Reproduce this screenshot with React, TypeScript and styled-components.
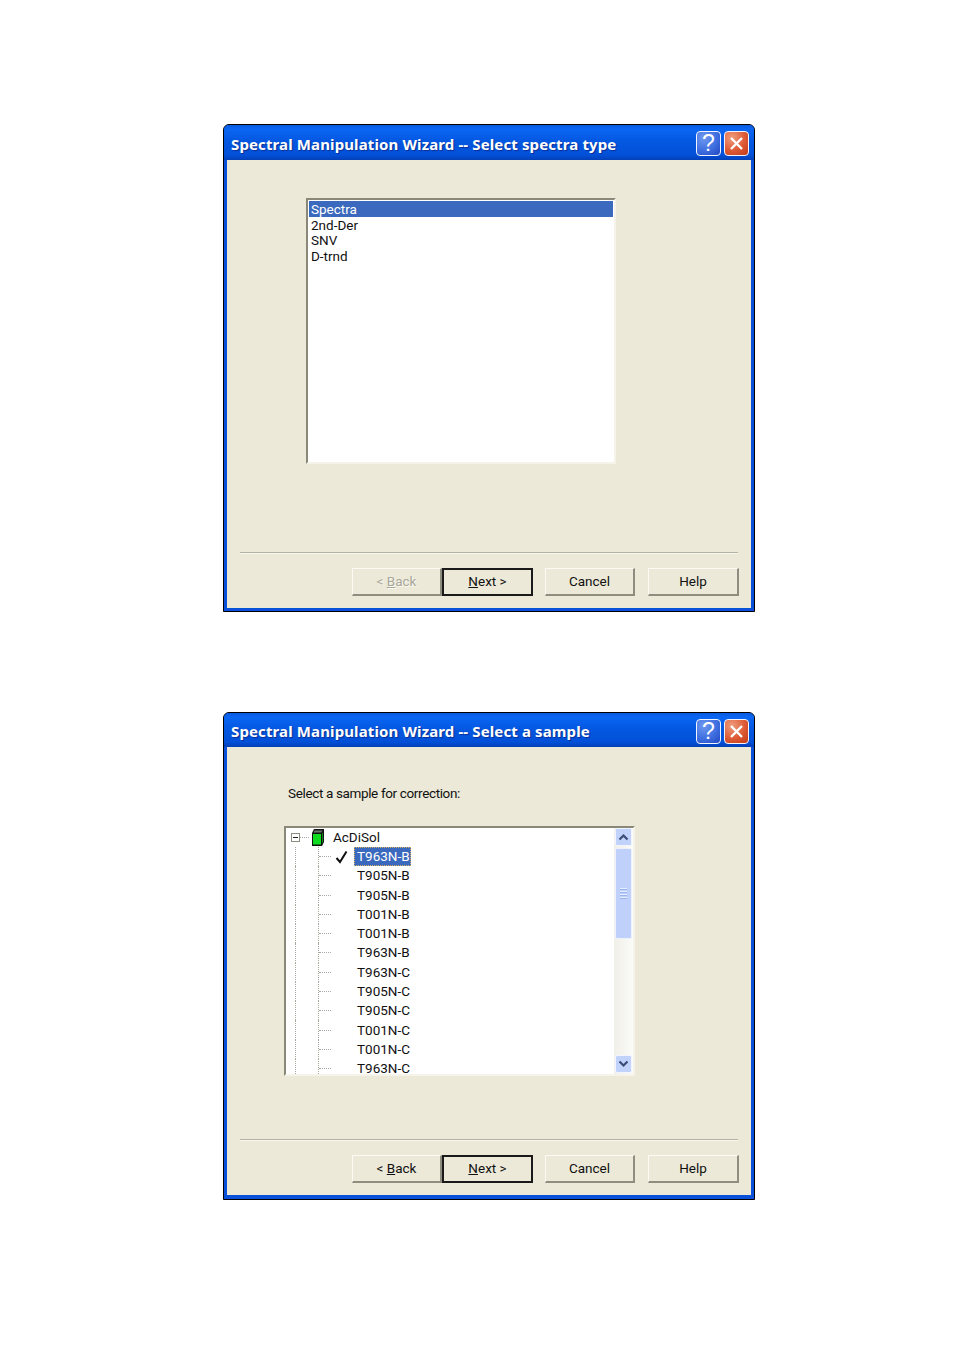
import React from 'react'
import styled, { createGlobalStyle } from 'styled-components'

const GlobalStyle = createGlobalStyle`
  html, body {
    margin: 0;
    padding: 0;
    background: #fff;
  }
`

const Page = styled.div`
  width: 955px;
  height: 1350px;
  box-sizing: border-box;
  padding: 124px 0 0 223px;
  display: flex;
  flex-direction: column;
  gap: 100px;
  font-family: Roboto, 'Liberation Sans', Arial, sans-serif;
  font-size: 13.5px;
  color: #111;
`

const Window = styled.div`
  width: 532px;
  height: 488px;
  box-sizing: border-box;
  display: flex;
  flex-direction: column;
  background: #0b50d8;
  border: 1px solid #000;
  border-radius: 6px 6px 0 0;
  overflow: hidden;
`

const TitleBar = styled.div<{ $compact?: boolean }>`
  height: ${p => (p.$compact ? 34 : 35)}px;
  flex: none;
  display: flex;
  align-items: center;
  justify-content: space-between;
  box-sizing: border-box;
  padding: 2px 5px 0 7px;
  background: linear-gradient(180deg, #0a5ae0 0%, #0a66f2 12%, #0458e2 45%, #0350d8 85%, #0340b8 100%);
`

const Title = styled.div`
  font-family: 'Noto Sans', sans-serif;
  font-size: 15px;
  font-weight: 700;
  letter-spacing: 0.12px;
  color: #fff;
  text-shadow: 1px 1px 1px #0a2f96;
  white-space: nowrap;
`

const TitleButtons = styled.div`
  display: flex;
  gap: 3px;
`

const CaptionButton = styled.div<{ $danger?: boolean }>`
  width: 25px;
  height: 25px;
  box-sizing: border-box;
  display: flex;
  align-items: center;
  justify-content: center;
  border: 1px solid #f2f5ff;
  border-radius: 4px;
  color: #fff;
  font-family: 'Liberation Sans', sans-serif;
  font-size: 23px;
  background: ${p =>
    p.$danger
      ? 'radial-gradient(circle at 30% 25%, #ef9d7e 0%, #dd5a35 55%, #c13a18 100%)'
      : 'radial-gradient(circle at 30% 25%, #6f98ef 0%, #3f6fe0 55%, #2148c0 100%)'};
`

const Body = styled.div<{ $compact?: boolean }>`
  flex: 1;
  min-height: 0;
  display: flex;
  flex-direction: column;
  margin: 0 3px ${p => (p.$compact ? 4 : 3)}px;
  background: #ece9d8;
`

const Content = styled.div`
  flex: 1;
  min-height: 0;
  display: flex;
  flex-direction: column;
  align-items: flex-start;
`

const ListBox = styled.div`
  width: 310px;
  height: 266px;
  margin: 38px 0 0 79px;
  box-sizing: border-box;
  padding: 1px 1px 0;
  background: #fff;
  border-style: solid;
  border-width: 2px;
  border-color: #8a8878 #f6f4ea #f6f4ea #8a8878;
`

const ListItem = styled.div<{ $selected?: boolean }>`
  height: 15.7px;
  line-height: 16px;
  padding-left: 2px;
  color: ${p => (p.$selected ? '#fff' : '#111')};
  background: ${p => (p.$selected ? '#3a69bd' : 'transparent')};
`

const Prompt = styled.div`
  margin: 38px 0 0 61px;
  height: 16px;
  line-height: 16px;
  letter-spacing: -0.36px;
`

const TreeBox = styled.div`
  width: 351px;
  height: 250px;
  margin: 25px 0 0 57px;
  box-sizing: border-box;
  display: flex;
  background: #fff;
  border-style: solid;
  border-width: 2px;
  border-color: #8a8878 #f6f4ea #f6f4ea #8a8878;
`

const TreeList = styled.div`
  flex: 1;
  min-width: 0;
  overflow: hidden;
`

const RootRow = styled.div`
  height: 19px;
  padding-bottom: 1px;
  box-sizing: border-box;
  display: flex;
  align-items: center;
  padding-left: 5px;
`

const Expander = styled.div`
  width: 9px;
  height: 9px;
  box-sizing: border-box;
  border: 1px solid #8c8c80;
  display: flex;
  align-items: center;
  justify-content: center;
  flex: none;
  &::after {
    content: '';
    width: 5px;
    height: 1px;
    background: #222;
  }
`

const RootLeader = styled.div`
  width: 9px;
  margin-right: 2px;
  border-top: 1px dotted #a8a8a0;
`

const RootLabel = styled.span`
  margin-left: 8px;
`

const TreeRow = styled.div`
  height: 19.27px;
  display: flex;
  align-items: center;
  padding-left: 9px;
`

const OuterGuide = styled.div`
  width: 23px;
  height: 100%;
  flex: none;
  box-sizing: border-box;
  border-left: 1px dotted #a8a8a0;
`

const BranchGuide = styled.div`
  width: 14px;
  height: 100%;
  flex: none;
  box-sizing: border-box;
  border-left: 1px dotted #a8a8a0;
  display: flex;
  align-items: center;
  &::after {
    content: '';
    width: 12px;
    border-top: 1px dotted #a8a8a0;
  }
`

const CheckSlot = styled.div`
  width: 22px;
  flex: none;
  display: flex;
  align-items: center;
  padding-left: 3px;
  box-sizing: border-box;
`

const NodeLabel = styled.span<{ $selected?: boolean }>`
  height: 19px;
  line-height: 18px;
  box-sizing: border-box;
  padding: 0 1px 0 3px;
  white-space: nowrap;
  color: ${p => (p.$selected ? '#fff' : '#111')};
  background: ${p => (p.$selected ? '#3a69bd' : 'transparent')};
  outline: ${p => (p.$selected ? '1px dotted #d8b060' : 'none')};
  outline-offset: -1px;
`

const ScrollBar = styled.div`
  width: 19px;
  flex: none;
  display: flex;
  flex-direction: column;
  align-items: center;
  gap: 2px;
  padding-bottom: 1px;
  box-sizing: border-box;
  background: linear-gradient(90deg, #f0efe8, #fbfbf8);
`

const ScrollButton = styled.div`
  width: 17px;
  height: 18px;
  flex: none;
  display: flex;
  align-items: center;
  justify-content: center;
  border: 1px solid #f2f5ff;
  box-sizing: border-box;
  border-radius: 2px;
  background: #c2d3fb;
`

const ScrollThumb = styled.div`
  width: 17px;
  height: 91px;
  flex: none;
  box-sizing: border-box;
  display: flex;
  flex-direction: column;
  align-items: center;
  justify-content: center;
  gap: 1px;
  border: 1px solid #eef2ff;
  border-radius: 2px;
  background: #bfd0fa;
`

const GripLine = styled.div`
  width: 7px;
  height: 1px;
  background: #e4ecff;
  border-bottom: 1px solid #9db4ea;
`

const ScrollTrack = styled.div`
  flex: 1;
`

const Footer = styled.div`
  flex: none;
  height: 56px;
  padding: 0 13px;
  display: flex;
  flex-direction: column;
`

const Separator = styled.div`
  height: 1px;
  background: #b4b2a2;
  border-bottom: 1px solid #f8f7f0;
`

const ButtonRow = styled.div`
  margin: 14px -1px 0 0;
  display: flex;
  justify-content: flex-end;
`

const Button = styled.div<{ $default?: boolean; $disabled?: boolean; $gap?: number; $width?: number }>`
  width: ${p => p.$width ?? 90}px;
  height: 28px;
  margin-left: ${p => p.$gap ?? 0}px;
  box-sizing: border-box;
  padding-bottom: 2px;
  display: flex;
  align-items: center;
  justify-content: center;
  border-style: solid;
  border-width: ${p => (p.$default ? '2px' : '1px 2px 2px 1px')};
  border-color: ${p => (p.$default ? '#1a1a1a' : '#fbfaf4 #8f8d80 #8f8d80 #fbfaf4')};
  color: ${p => (p.$disabled ? '#a9a798' : '#111')};
  text-shadow: ${p => (p.$disabled ? '1px 1px 0 #fbfaf4' : 'none')};
`

const samples = [
  'T963N-B', 'T905N-B', 'T905N-B', 'T001N-B', 'T001N-B', 'T963N-B',
  'T963N-C', 'T905N-C', 'T905N-C', 'T001N-C', 'T001N-C', 'T963N-C',
]

const CloseIcon = () => (
  <svg width="15" height="15" viewBox="0 0 15 15">
    <path d="M2 2 L13 13 M13 2 L2 13" stroke="#fff" strokeWidth="2.4" fill="none" />
  </svg>
)

const DiskIcon = () => (
  <svg width="14" height="17" viewBox="0 0 14 17">
    <path d="M3 0 H13 V13 L11 17 H1 V4 Z" fill="#111" />
    <path d="M3.5 1.5 H11.5 L10 3.5 H2.5 Z" fill="#6c7a6c" />
    <path d="M2 5 H10 V15.5 H2 Z" fill="#0fdc1e" />
    <path d="M11 5 L12 3 V12.5 L11 15 Z" fill="#0a8a14" />
  </svg>
)

const CheckIcon = () => (
  <svg width="13" height="14" viewBox="0 0 13 14">
    <path d="M1.5 8 L5 12 L11.5 1.5" stroke="#111" strokeWidth="2" fill="none" />
  </svg>
)

const Chevron = ({ up }: { up?: boolean }) => (
  <svg width="11" height="8" viewBox="0 0 11 8">
    <path d={up ? 'M1.5 6.5 L5.5 2.5 L9.5 6.5' : 'M1.5 1.5 L5.5 5.5 L9.5 1.5'} stroke="#3a4d78" strokeWidth="2.2" fill="none" />
  </svg>
)

const WizardWindow = ({ title, backDisabled, compact, children }: { title: string; backDisabled?: boolean; compact?: boolean; children: React.ReactNode }) => (
  <Window>
    <TitleBar $compact={compact}>
      <Title>{title}</Title>
      <TitleButtons>
        <CaptionButton>?</CaptionButton>
        <CaptionButton $danger><CloseIcon /></CaptionButton>
      </TitleButtons>
    </TitleBar>
    <Body $compact={compact}>
      <Content>{children}</Content>
      <Footer>
        <Separator />
        <ButtonRow>
          <Button $disabled={backDisabled}>&lt;&nbsp;<u>B</u>ack</Button>
          <Button $default $width={91}><u>N</u>ext &gt;</Button>
          <Button $gap={12}>Cancel</Button>
          <Button $gap={13} $width={91}>Help</Button>
        </ButtonRow>
      </Footer>
    </Body>
  </Window>
)

export default function App() {
  return (
    <Page>
      <GlobalStyle />
      <WizardWindow title="Spectral Manipulation Wizard -- Select spectra type" backDisabled>
        <ListBox>
          <ListItem $selected>Spectra</ListItem>
          <ListItem>2nd-Der</ListItem>
          <ListItem>SNV</ListItem>
          <ListItem>D-trnd</ListItem>
        </ListBox>
      </WizardWindow>

      <WizardWindow title="Spectral Manipulation Wizard -- Select a sample" compact>
        <Prompt>Select a sample for correction:</Prompt>
        <TreeBox>
          <TreeList>
            <RootRow>
              <Expander />
              <RootLeader />
              <DiskIcon />
              <RootLabel>AcDiSol</RootLabel>
            </RootRow>
            {samples.map((name, i) => (
              <TreeRow key={i}>
                <OuterGuide />
                <BranchGuide />
                <CheckSlot>{i === 0 && <CheckIcon />}</CheckSlot>
                <NodeLabel $selected={i === 0}>{name}</NodeLabel>
              </TreeRow>
            ))}
          </TreeList>
          <ScrollBar>
            <ScrollButton><Chevron up /></ScrollButton>
            <ScrollThumb>
              <GripLine />
              <GripLine />
              <GripLine />
              <GripLine />
            </ScrollThumb>
            <ScrollTrack />
            <ScrollButton><Chevron /></ScrollButton>
          </ScrollBar>
        </TreeBox>
      </WizardWindow>
    </Page>
  )
}
